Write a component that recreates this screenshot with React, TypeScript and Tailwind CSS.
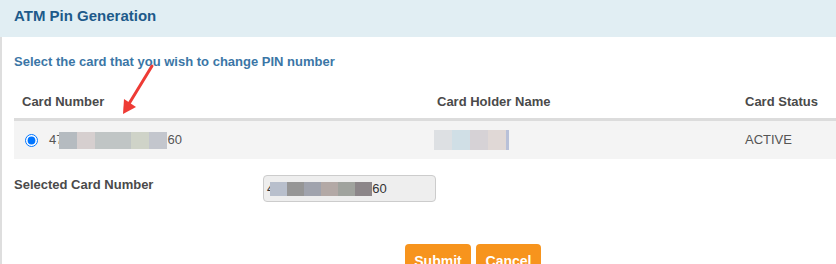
import React from 'react';

const font = { fontFamily: '"Liberation Sans", Arial, sans-serif' };

// redaction blocks (pixelated masks in the screenshot)
const cardMask = ['#b5bbc0', '#d6cfcf', '#c0c5c5', '#c0c5c5', '#cfd3c8', '#c3c6cd'];
const nameMask = ['#dde0e3', '#d0dfe6', '#d6d2d6', '#e0d8d6'];
const inputMask = ['#b8bfcc', '#969696', '#a0a3ad', '#b3a9a6', '#a0a39e', '#8c8689'];

function Mask({ colors, w, h }: { colors: string[]; w: string; h: string }) {
  return (
    <span className="inline-flex">
      {colors.map((c, i) => (
        <span key={i} className={`${w} ${h}`} style={{ backgroundColor: c }} />
      ))}
    </span>
  );
}

export default function App() {
  return (
    <div className="relative w-[836px] h-[264px] overflow-hidden bg-white" style={font}>
      <div className="h-[37px] bg-[#e1eef3] pl-[14px] pt-[5px]">
        <h1 className="text-[15px] font-bold text-[#1d5a8a]">ATM Pin Generation</h1>
      </div>

      <div className="h-[227px] border-l-2 border-[#dedede] pl-[12px] pt-[16px]">
        <p className="text-[13px] font-bold text-[#3b76a6] leading-[18px]">
          Select the card that you wish to change PIN number
        </p>

        <div className="mt-[10px] w-[900px] text-[13px] text-[#444]">
          <div className="flex h-[40px] items-end pb-[7px] border-b-[3px] border-[#dcdcdc] font-bold text-[#4a4a4a]">
            <div className="w-[415px] pl-[8px]">Card Number</div>
            <div className="w-[308px] pl-[8px]">Card Holder Name</div>
            <div className="pl-[8px]">Card Status</div>
          </div>
          <div className="flex h-[38px] items-center bg-[#f4f4f4] text-[#555]">
            <div className="w-[415px] pl-[11px] flex items-center">
              <input type="radio" defaultChecked className="w-[13px] h-[13px] accent-[#0075ff] m-0" />
              <span className="ml-[11px] flex items-center">
                47
                <span className="-ml-[4px] flex">
                  <Mask colors={cardMask} w="w-[18px]" h="h-[17px]" />
                </span>
                60
              </span>
            </div>
            <div className="w-[308px] pl-[5px] flex items-center">
              <Mask colors={nameMask} w="w-[18px]" h="h-[20px]" />
              <span className="w-[3px] h-[20px] bg-[#b8c0d8]" />
            </div>
            <div className="pl-[8px]">ACTIVE</div>
          </div>
        </div>

        <div className="flex mt-[16px]">
          <div className="w-[249px] text-[13px] font-bold text-[#4a4a4a]">Selected Card Number</div>
          <div className="w-[173px] h-[27px] bg-[#eeeeee] border border-[#cccccc] rounded-[4px] flex items-center pl-[3px] text-[13px] text-[#333]">
            4
            <span className="-ml-[4px] flex">
              <Mask colors={inputMask} w="w-[17px]" h="h-[14px]" />
            </span>
            60
          </div>
        </div>

        <div className="flex gap-[5px] mt-[42px] ml-[391px]">
          <button className="w-[66px] h-[30px] bg-[#f7941d] rounded-[4px] text-white font-bold text-[14px] pt-[3px] leading-none">
            Submit
          </button>
          <button className="w-[65px] h-[30px] bg-[#f7941d] rounded-[4px] text-white font-bold text-[14px] pt-[3px] leading-none">
            Cancel
          </button>
        </div>
      </div>

      {/* annotation arrow drawn on top of the screenshot */}
      <svg className="absolute left-0 top-0 pointer-events-none" width="836" height="264">
        <line x1="152" y1="66" x2="127" y2="107" stroke="#ee3b35" strokeWidth="3" strokeLinecap="round" />
        <polygon points="123,114 124,99 136,107" fill="#ee3b35" />
      </svg>
    </div>
  );
}
